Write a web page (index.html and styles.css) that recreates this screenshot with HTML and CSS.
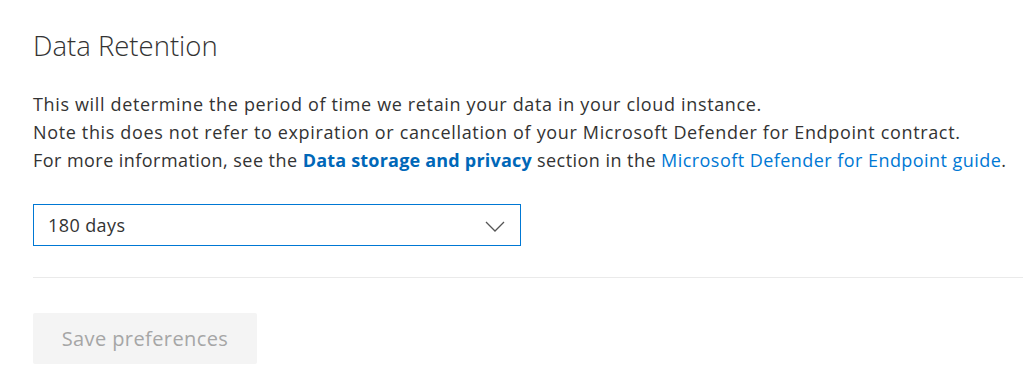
FILE: index.html
```html
<!DOCTYPE html>
<html lang="en">
<head>
  <meta charset="UTF-8">
  <title>Data Retention</title>
  <link rel="stylesheet" href="styles.css">
</head>
<body>
  <!-- Data retention settings -->
  <section class="retention">
    <h2 class="title">Data Retention</h2>

    <div class="description">
      <p>This will determine the period of time we retain your data in your cloud instance.</p>
      <p>Note this does not refer to expiration or cancellation of your Microsoft Defender for Endpoint contract.</p>
      <p>For more information, see the <a href="#" class="strong-link">Data storage and privacy</a> section in the <a href="#">Microsoft Defender for Endpoint guide</a>.</p>
    </div>

    <div class="dropdown">
      <span class="dropdown-value">180 days</span>
      <svg class="chevron" width="20" height="11" viewBox="0 0 20 11">
        <path d="M1 1 L10 10 L19 1" fill="none" stroke="#555" stroke-width="1.3"/>
      </svg>
    </div>

    <hr class="divider">

    <button class="save-btn" disabled>Save preferences</button>
  </section>
</body>
</html>
```

FILE: styles.css
```css
/* base */
body {
  margin: 0;
  font-family: "Open Sans", "Noto Sans", sans-serif;
  color: #333;
  background: #fff;
}

.retention {
  padding: 26px 0 0 33px;
}

.title {
  margin: 0 0 24px;
  font-size: 27.5px;
  font-weight: 300;
  color: #333;
  line-height: 40px;
}

/* description text */
.description {
  font-size: 18px;
  letter-spacing: 0.65px;
  line-height: 28px;
  color: #333;
}

.description p {
  margin: 0;
}

.description p:last-child {
  letter-spacing: 0.45px;
}

.description a {
  color: #0078d4;
  text-decoration: none;
}

.description a.strong-link {
  font-weight: 700;
  color: #0067b8;
  letter-spacing: 0.2px;
}

/* select box */
.dropdown {
  margin-top: 30px;
  width: 457px;
  height: 40px;
  border: 1px solid #0078d4;
  display: flex;
  align-items: center;
  justify-content: space-between;
  padding: 0 15px 0 14px;
  font-size: 18px;
  letter-spacing: 0.4px;
}

.dropdown-value {
  color: #333;
}

.chevron {
  margin-top: 3px;
}

.divider {
  margin: 31px 0 0;
  border: 0;
  border-top: 1px solid #eaeaea;
}

/* button */
.save-btn {
  margin-top: 35px;
  width: 224px;
  height: 51px;
  border: 0;
  border-radius: 2px;
  background: #f4f4f4;
  color: #a6a6a6;
  font-family: inherit;
  font-size: 20px;
  letter-spacing: 0.4px;
}
```
